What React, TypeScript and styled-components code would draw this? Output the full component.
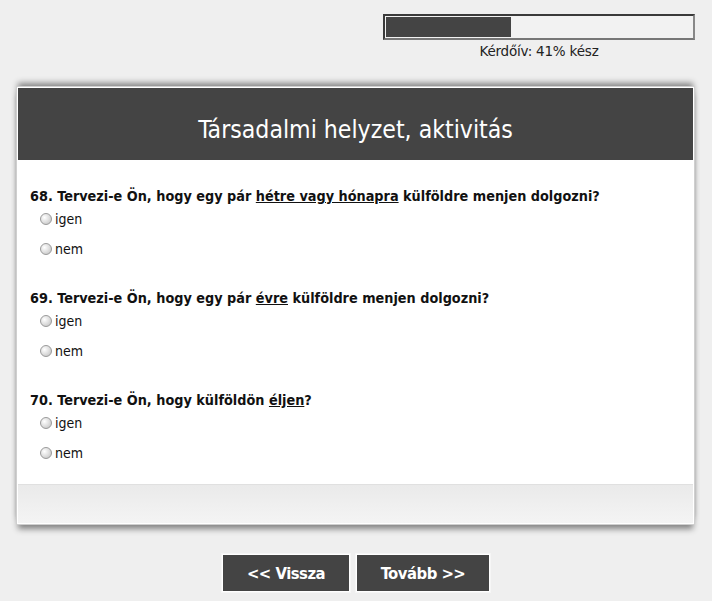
import React from "react";
import styled, { createGlobalStyle } from "styled-components";

const GlobalStyle = createGlobalStyle`
  html, body {
    margin: 0;
    padding: 0;
    background: #efefef;
  }
  body {
    font-family: "DejaVu Sans", Tahoma, sans-serif;
    color: #111;
  }
`;

const Page = styled.div`
  width: 712px;
  height: 601px;
  display: flex;
  flex-direction: column;
`;

const ProgressArea = styled.div`
  display: flex;
  flex-direction: column;
  align-items: flex-end;
  padding: 14px 17px 0 0;
`;

const ProgressBox = styled.div`
  width: 312px;
  display: flex;
  flex-direction: column;
  align-items: center;
`;

const Track = styled.div`
  box-sizing: border-box;
  width: 100%;
  height: 26px;
  border: 2px solid #3a3a3a;
  border-right-color: #888;
  border-bottom-color: #777;
  background: #f2f2f2;
  padding: 1px;
`;

const Fill = styled.div`
  height: 100%;
  background: #444;
`;

const ProgressLabel = styled.div`
  margin-top: 3px;
  font-size: 13.5px;
  color: #222;
  letter-spacing: -0.2px;
`;

const Card = styled.section`
  margin: 27px 17px 0 16px;
  border: 1px solid #cfcfcf;
  background: #fff;
  padding: 1px;
  box-shadow: 0 -5px 6px -2px rgba(0, 0, 0, 0.45), 0 6px 6px -2px rgba(0, 0, 0, 0.45);
`;

const Header = styled.h1`
  margin: 0;
  height: 72px;
  background: #444;
  color: #fff;
  display: flex;
  align-items: center;
  justify-content: center;
  font-family: "DejaVu Sans Condensed", "DejaVu Sans", sans-serif;
  font-weight: normal;
  font-size: 24.6px;
  padding-top: 10px;
  box-sizing: border-box;
`;

const Body = styled.div`
  padding: 28px 12px 16px;
  display: flex;
  flex-direction: column;
  gap: 26px;
`;

const Question = styled.div`
  display: flex;
  flex-direction: column;
`;

const QuestionTitle = styled.div`
  font-family: "DejaVu Sans Condensed", "DejaVu Sans", sans-serif;
  font-weight: bold;
  font-size: 14.3px;
  margin-bottom: 0;
`;

const Underlined = styled.span`
  text-decoration: underline;
`;

const Option = styled.label`
  display: flex;
  align-items: center;
  height: 30px;
  padding-left: 10px;
  font-family: "DejaVu Sans Condensed", "DejaVu Sans", sans-serif;
  font-size: 14px;
  color: #111;
`;

const Radio = styled.input.attrs({ type: "radio" })`
  appearance: none;
  width: 12px;
  height: 12px;
  margin: 0 3px 0 0;
  border-radius: 50%;
  border: 1px solid #9a9a9a;
  background: radial-gradient(circle at 35% 35%, #ffffff 0%, #e2e2e2 45%, #bcbcbc 100%);
`;

const Footer = styled.div`
  height: 38px;
  border-top: 1px solid #e0e0e0;
  background: linear-gradient(#eaeaea, #f4f4f4);
`;

const Buttons = styled.div`
  display: flex;
  justify-content: center;
  gap: 6px;
  margin-top: 29px;
`;

const NavButton = styled.button<{ $width: number }>`
  width: ${(p) => p.$width}px;
  height: 38px;
  background: #444;
  color: #fff;
  border: 1px solid #fff;
  outline: 1px solid #f6f6f6;
  font-family: "Liberation Sans Narrow", "DejaVu Sans Condensed", sans-serif;
  font-weight: bold;
  font-size: 16.5px;
  letter-spacing: -0.5px;
  cursor: pointer;
`;

const questions = [
  {
    n: 68,
    parts: ["Tervezi-e Ön, hogy egy pár ", "hétre vagy hónapra", " külföldre menjen dolgozni?"],
  },
  {
    n: 69,
    parts: ["Tervezi-e Ön, hogy egy pár ", "évre", " külföldre menjen dolgozni?"],
  },
  {
    n: 70,
    parts: ["Tervezi-e Ön, hogy külföldön ", "éljen", "?"],
  },
];

const App = () => {
  return (
    <Page>
      <GlobalStyle />
      <ProgressArea>
        <ProgressBox>
          <Track>
            <Fill style={{ width: "41%" }} />
          </Track>
          <ProgressLabel>Kérdőív: 41% kész</ProgressLabel>
        </ProgressBox>
      </ProgressArea>
      <Card>
        <Header>Társadalmi helyzet, aktivitás</Header>
        <Body>
          {questions.map((q) => (
            <Question key={q.n}>
              <QuestionTitle>
                {q.n}. {q.parts[0]}
                <Underlined>{q.parts[1]}</Underlined>
                {q.parts[2]}
              </QuestionTitle>
              <Option>
                <Radio name={`q${q.n}`} />
                igen
              </Option>
              <Option>
                <Radio name={`q${q.n}`} />
                nem
              </Option>
            </Question>
          ))}
        </Body>
        <Footer />
      </Card>
      <Buttons>
        <NavButton $width={128}>&lt;&lt; Vissza</NavButton>
        <NavButton $width={134}>Tovább &gt;&gt;</NavButton>
      </Buttons>
    </Page>
  );
};

export default App;
